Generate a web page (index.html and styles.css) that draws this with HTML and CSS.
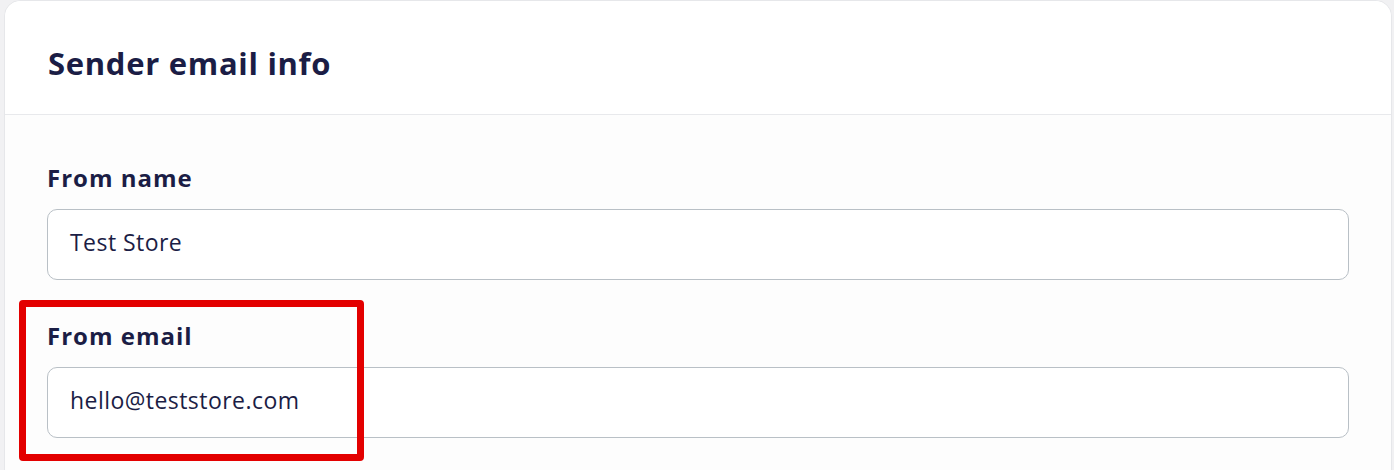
FILE: index.html
```html
<!DOCTYPE html>
<html>
<head>
<meta charset="utf-8">
<link rel="stylesheet" href="styles.css">
</head>
<body>
<div class="page">
  <section class="card">
    <header class="card-header">
      <h2 class="card-title">Sender email info</h2>
    </header>
    <div class="card-body">
      <div class="field">
        <label class="field-label">From name</label>
        <div class="field-input">Test Store</div>
      </div>
      <div class="field">
        <label class="field-label">From email</label>
        <div class="field-input">hello@teststore.com</div>
      </div>
    </div>
  </section>
  <div class="highlight"></div>
</div>
</body>
</html>
```

FILE: styles.css
```css
html, body {
  margin: 0;
  padding: 0;
  background: #f1f1f3;
  font-family: "Open Sans", "Noto Sans", sans-serif;
  color: #1b1d45;
}
.page {
  position: relative;
  width: 1394px;
  height: 470px;
  overflow: hidden;
  padding-left: 4px;
  box-sizing: border-box;
}
.card {
  width: 1388px;
  background: #fdfdfd;
  border: 1px solid #e6e7ea;
  border-radius: 16px 16px 0 0;
  box-sizing: border-box;
  height: 520px;
}
.card-header {
  height: 113px;
  border-bottom: 1px solid #e8e9ec;
  background: #ffffff;
  border-radius: 16px 16px 0 0;
  display: flex;
  align-items: center;
  padding: 0 0 0 43px;
}
.card-title {
  margin: 0;
  font-size: 31px;
  font-weight: 700;
  letter-spacing: 0.7px;
  padding-top: 10px;
}
.card-body {
  padding: 48px 42px 0 42px;
  display: flex;
  flex-direction: column;
  gap: 41px;
}
.field {
  display: flex;
  flex-direction: column;
  gap: 16px;
}
.field-label {
  font-size: 24px;
  font-weight: 700;
  letter-spacing: 1px;
  line-height: 30px;
}
.field-input {
  height: 71px;
  box-sizing: border-box;
  border: 1px solid #b9c0c6;
  border-radius: 10px;
  background: #ffffff;
  padding: 0 22px 5px 22px;
  display: flex;
  align-items: center;
  font-size: 23px;
  letter-spacing: 0.45px;
}
.highlight {
  position: absolute;
  left: 19px;
  top: 300px;
  width: 345px;
  height: 161px;
  box-sizing: border-box;
  border: 7px solid #e30000;
  border-radius: 4px;
}
```
